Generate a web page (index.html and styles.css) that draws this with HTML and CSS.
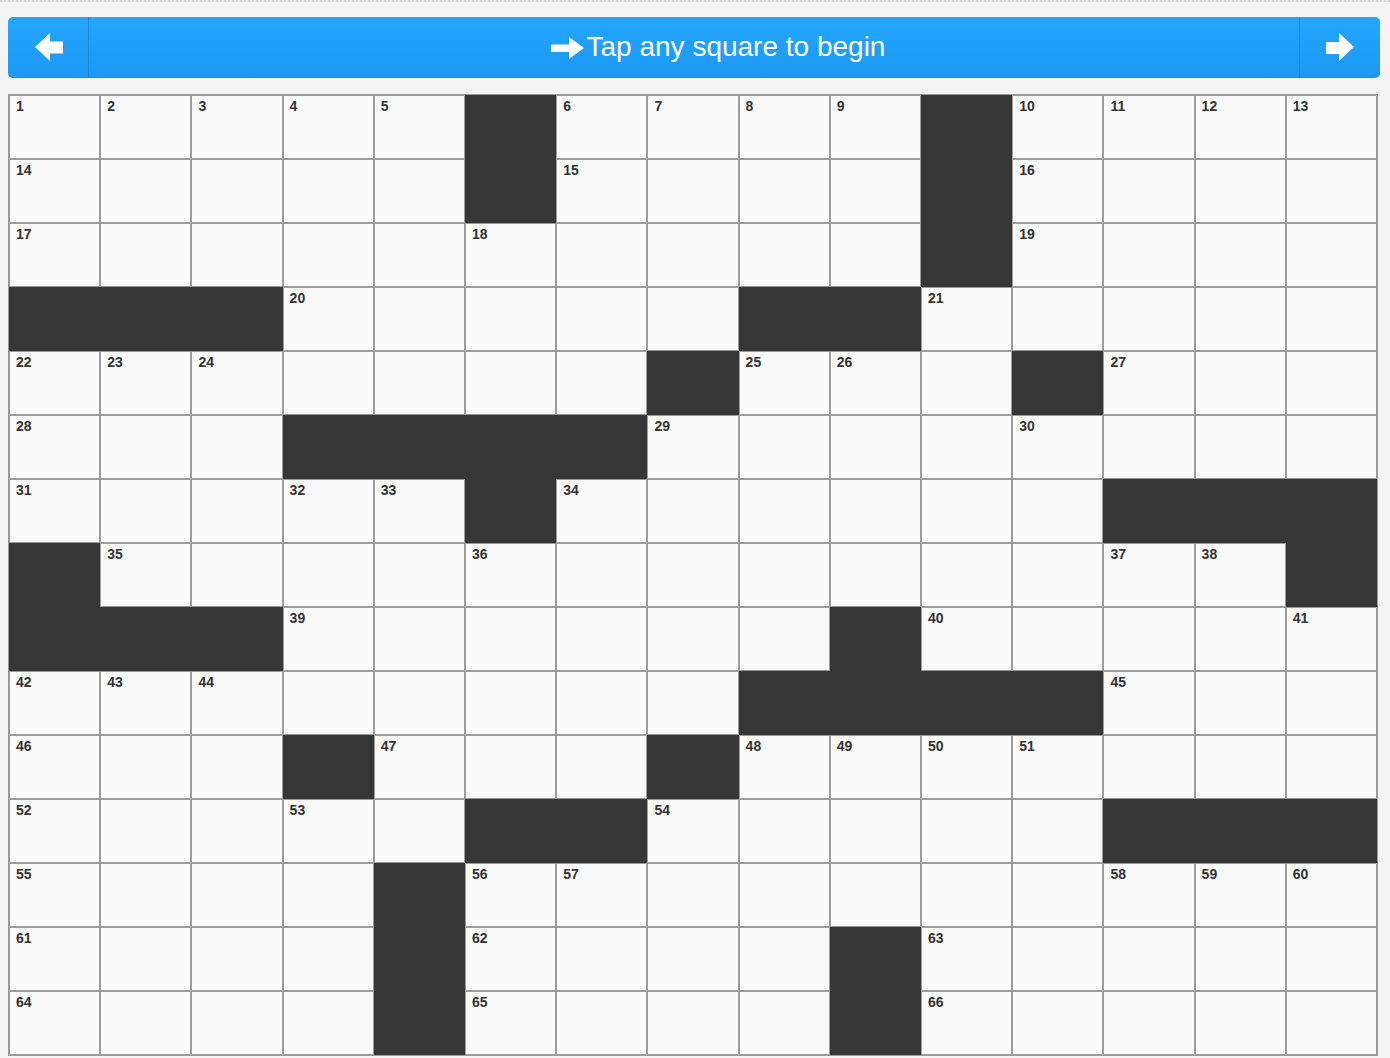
FILE: index.html
```html
<!DOCTYPE html>
<html>
<head>
<meta charset="utf-8">
<link rel="stylesheet" href="styles.css">
</head>
<body>
<div class="topline"></div>
<div class="page">
  <div class="bar">
    <div class="nav nav-left">
      <svg width="30" height="30" viewBox="0 0 30 30"><path d="M1 15 L16 1 L16 9.5 L29 9.5 L29 21.5 L16 21.5 L16 29 Z" fill="#fff"/></svg>
    </div>
    <div class="title">
      <svg class="title-arrow" width="33" height="22" viewBox="0 0 33 22"><path d="M0 7.5 L18 7.5 L18 0 L33 11 L18 22 L18 15 L0 15 Z" fill="#fff"/></svg>
      <span class="title-text">Tap any square to begin</span>
    </div>
    <div class="nav nav-right">
      <svg width="30" height="30" viewBox="0 0 30 30"><path d="M29 15 L14 1 L14 10 L1 10 L1 22 L14 22 L14 29 Z" fill="#fff"/></svg>
    </div>
  </div>

  <div class="grid">
    <!-- row 1 -->
    <div class="c"><span class="n">1</span></div><div class="c"><span class="n">2</span></div><div class="c"><span class="n">3</span></div><div class="c"><span class="n">4</span></div><div class="c"><span class="n">5</span></div><div class="c b"></div><div class="c"><span class="n">6</span></div><div class="c"><span class="n">7</span></div><div class="c"><span class="n">8</span></div><div class="c"><span class="n">9</span></div><div class="c b"></div><div class="c"><span class="n">10</span></div><div class="c"><span class="n">11</span></div><div class="c"><span class="n">12</span></div><div class="c"><span class="n">13</span></div>
    <!-- row 2 -->
    <div class="c"><span class="n">14</span></div><div class="c"></div><div class="c"></div><div class="c"></div><div class="c"></div><div class="c b"></div><div class="c"><span class="n">15</span></div><div class="c"></div><div class="c"></div><div class="c"></div><div class="c b"></div><div class="c"><span class="n">16</span></div><div class="c"></div><div class="c"></div><div class="c"></div>
    <!-- row 3 -->
    <div class="c"><span class="n">17</span></div><div class="c"></div><div class="c"></div><div class="c"></div><div class="c"></div><div class="c"><span class="n">18</span></div><div class="c"></div><div class="c"></div><div class="c"></div><div class="c"></div><div class="c b"></div><div class="c"><span class="n">19</span></div><div class="c"></div><div class="c"></div><div class="c"></div>
    <!-- row 4 -->
    <div class="c b"></div><div class="c b"></div><div class="c b"></div><div class="c"><span class="n">20</span></div><div class="c"></div><div class="c"></div><div class="c"></div><div class="c"></div><div class="c b"></div><div class="c b"></div><div class="c"><span class="n">21</span></div><div class="c"></div><div class="c"></div><div class="c"></div><div class="c"></div>
    <!-- row 5 -->
    <div class="c"><span class="n">22</span></div><div class="c"><span class="n">23</span></div><div class="c"><span class="n">24</span></div><div class="c"></div><div class="c"></div><div class="c"></div><div class="c"></div><div class="c b"></div><div class="c"><span class="n">25</span></div><div class="c"><span class="n">26</span></div><div class="c"></div><div class="c b"></div><div class="c"><span class="n">27</span></div><div class="c"></div><div class="c"></div>
    <!-- row 6 -->
    <div class="c"><span class="n">28</span></div><div class="c"></div><div class="c"></div><div class="c b"></div><div class="c b"></div><div class="c b"></div><div class="c b"></div><div class="c"><span class="n">29</span></div><div class="c"></div><div class="c"></div><div class="c"></div><div class="c"><span class="n">30</span></div><div class="c"></div><div class="c"></div><div class="c"></div>
    <!-- row 7 -->
    <div class="c"><span class="n">31</span></div><div class="c"></div><div class="c"></div><div class="c"><span class="n">32</span></div><div class="c"><span class="n">33</span></div><div class="c b"></div><div class="c"><span class="n">34</span></div><div class="c"></div><div class="c"></div><div class="c"></div><div class="c"></div><div class="c"></div><div class="c b"></div><div class="c b"></div><div class="c b"></div>
    <!-- row 8 -->
    <div class="c b"></div><div class="c"><span class="n">35</span></div><div class="c"></div><div class="c"></div><div class="c"></div><div class="c"><span class="n">36</span></div><div class="c"></div><div class="c"></div><div class="c"></div><div class="c"></div><div class="c"></div><div class="c"></div><div class="c"><span class="n">37</span></div><div class="c"><span class="n">38</span></div><div class="c b"></div>
    <!-- row 9 -->
    <div class="c b"></div><div class="c b"></div><div class="c b"></div><div class="c"><span class="n">39</span></div><div class="c"></div><div class="c"></div><div class="c"></div><div class="c"></div><div class="c"></div><div class="c b"></div><div class="c"><span class="n">40</span></div><div class="c"></div><div class="c"></div><div class="c"></div><div class="c"><span class="n">41</span></div>
    <!-- row 10 -->
    <div class="c"><span class="n">42</span></div><div class="c"><span class="n">43</span></div><div class="c"><span class="n">44</span></div><div class="c"></div><div class="c"></div><div class="c"></div><div class="c"></div><div class="c"></div><div class="c b"></div><div class="c b"></div><div class="c b"></div><div class="c b"></div><div class="c"><span class="n">45</span></div><div class="c"></div><div class="c"></div>
    <!-- row 11 -->
    <div class="c"><span class="n">46</span></div><div class="c"></div><div class="c"></div><div class="c b"></div><div class="c"><span class="n">47</span></div><div class="c"></div><div class="c"></div><div class="c b"></div><div class="c"><span class="n">48</span></div><div class="c"><span class="n">49</span></div><div class="c"><span class="n">50</span></div><div class="c"><span class="n">51</span></div><div class="c"></div><div class="c"></div><div class="c"></div>
    <!-- row 12 -->
    <div class="c"><span class="n">52</span></div><div class="c"></div><div class="c"></div><div class="c"><span class="n">53</span></div><div class="c"></div><div class="c b"></div><div class="c b"></div><div class="c"><span class="n">54</span></div><div class="c"></div><div class="c"></div><div class="c"></div><div class="c"></div><div class="c b"></div><div class="c b"></div><div class="c b"></div>
    <!-- row 13 -->
    <div class="c"><span class="n">55</span></div><div class="c"></div><div class="c"></div><div class="c"></div><div class="c b"></div><div class="c"><span class="n">56</span></div><div class="c"><span class="n">57</span></div><div class="c"></div><div class="c"></div><div class="c"></div><div class="c"></div><div class="c"></div><div class="c"><span class="n">58</span></div><div class="c"><span class="n">59</span></div><div class="c"><span class="n">60</span></div>
    <!-- row 14 -->
    <div class="c"><span class="n">61</span></div><div class="c"></div><div class="c"></div><div class="c"></div><div class="c b"></div><div class="c"><span class="n">62</span></div><div class="c"></div><div class="c"></div><div class="c"></div><div class="c b"></div><div class="c"><span class="n">63</span></div><div class="c"></div><div class="c"></div><div class="c"></div><div class="c"></div>
    <!-- row 15 -->
    <div class="c"><span class="n">64</span></div><div class="c"></div><div class="c"></div><div class="c"></div><div class="c b"></div><div class="c"><span class="n">65</span></div><div class="c"></div><div class="c"></div><div class="c"></div><div class="c b"></div><div class="c"><span class="n">66</span></div><div class="c"></div><div class="c"></div><div class="c"></div><div class="c"></div>
  </div>
</div>
</body>
</html>
```

FILE: styles.css
```css
* { box-sizing: border-box; }

html, body {
  margin: 0;
  padding: 0;
  background: #f4f4f4;
  font-family: "Liberation Sans", Arial, sans-serif;
}

body {
  height: 1058px;
  overflow: hidden;
}

.topline {
  height: 0;
  border-top: 2px dotted #cfcfcf;
}

.page {
  padding: 0 8px;
}

.bar {
  margin-top: 15px;
  width: 1372px;
  height: 61px;
  display: flex;
  background: linear-gradient(#24a6ff, #1b98f2);
  border-radius: 5px;
  border-bottom: 1px solid #1a8de0;
}

.nav {
  width: 81px;
  flex: none;
  display: flex;
  align-items: center;
  justify-content: flex-start;
}

.nav-left {
  border-right: 1px solid #1789dc;
  padding-left: 26px;
}

.nav-right {
  border-left: 1px solid #1789dc;
  padding-left: 25px;
}

.title {
  flex: 1;
  display: flex;
  align-items: center;
  justify-content: center;
  padding-left: 48px;
  color: #fff;
}

.title-arrow {
  margin-right: 3px;
  margin-top: 1px;
}

.title-text {
  font-size: 28px;
  line-height: 32px;
}

.grid {
  margin-top: 16px;
  width: 1370px;
  border: 1px solid #9a9a9a;
  display: grid;
  grid-template-columns: repeat(15, 1fr);
  grid-auto-rows: 64px;
  background: #f8f8f8;
}

.c {
  border: 1px solid #9c9c9c;
  background: #fafafa;
  padding: 2px 6px;
}

.c.b {
  background: #363636;
  border-color: #363636;
}

.n {
  display: block;
  font-size: 14px;
  line-height: 16px;
  font-weight: bold;
  color: #333;
}
```
